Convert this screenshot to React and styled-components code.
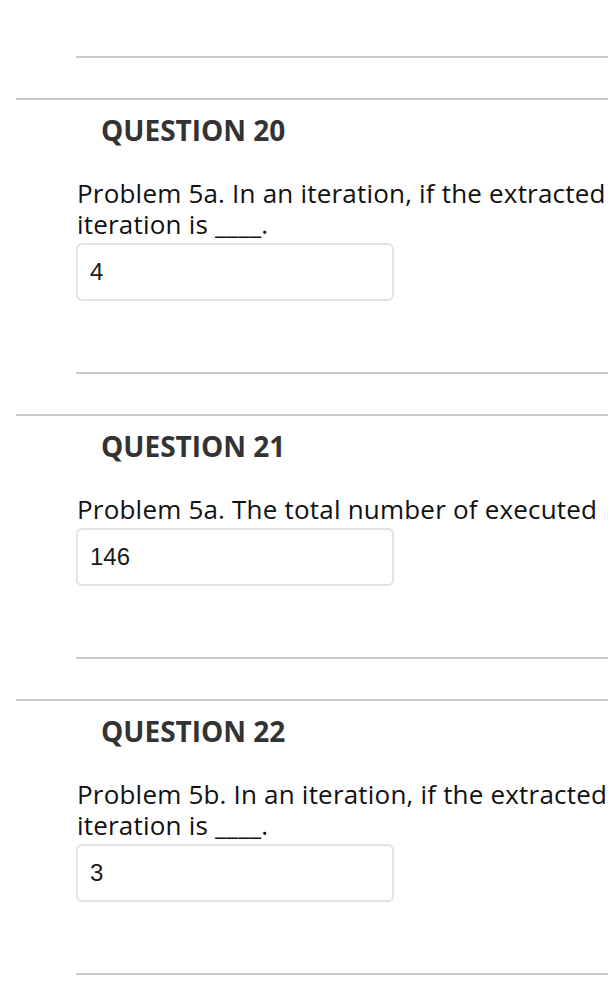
import React from 'react';
import styled, { createGlobalStyle } from 'styled-components';

const GlobalStyle = createGlobalStyle`
  html, body {
    margin: 0;
    padding: 0;
    background: #ffffff;
    overflow: hidden;
  }
`;

const Page = styled.div`
  width: 608px;
  padding-top: 56px;
  font-family: 'Open Sans', 'Liberation Sans', sans-serif;
  overflow: hidden;
`;

const Rule = styled.div`
  margin-left: ${p => (p.$outer ? '16px' : '76px')};
  border-top: 2px solid #cccccc;
`;

const Question = styled.section`
  padding-top: 40px;
`;

const Body = styled.div`
  padding: 0 0 71px 0;
`;

const Title = styled.h2`
  margin: 12px 0 0 101px;
  font-size: 28px;
  line-height: 36px;
  font-weight: 700;
  color: #333333;
`;

const Prompt = styled.p`
  margin: 30px 0 0 77px;
  font-size: 26px;
  line-height: 31px;
  letter-spacing: 0.2px;
  color: #111111;
  white-space: nowrap;
`;

const Line = styled.span`
  display: block;
`;

const Answer = styled.input`
  display: block;
  box-sizing: border-box;
  margin: 3px 0 0 76px;
  width: 318px;
  height: 58px;
  padding: 0 12px;
  border: 2px solid #e2e2e2;
  border-radius: 6px;
  background: #ffffff;
  font-family: 'Liberation Sans', Arial, sans-serif;
  font-size: 24px;
  color: #1a1a1a;
  outline: none;
`;

const questions = [
  {
    id: 20,
    lines: ['Problem 5a. In an iteration, if the extracted', 'iteration is ____.'],
    answer: '4'
  },
  {
    id: 21,
    lines: ['Problem 5a. The total number of executed'],
    answer: '146'
  },
  {
    id: 22,
    lines: ['Problem 5b. In an iteration, if the extracted', 'iteration is ____.'],
    answer: '3'
  }
];

const App = () => (
  <>
    <GlobalStyle />
    <Page>
      <Rule />
      {questions.map(q => (
        <Question key={q.id}>
          <Rule $outer />
          <Body>
            <Title>{`QUESTION ${q.id}`}</Title>
            <Prompt>
              {q.lines.map(line => (
                <Line key={line}>{line}</Line>
              ))}
            </Prompt>
            <Answer type="text" readOnly value={q.answer} />
          </Body>
          <Rule />
        </Question>
      ))}
    </Page>
  </>
);

export default App;
